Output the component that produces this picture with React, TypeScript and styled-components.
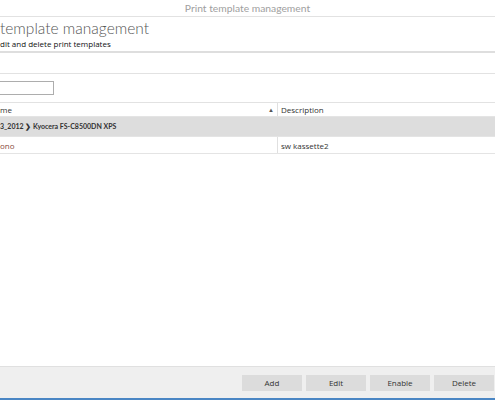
import React from "react";
import styled, { createGlobalStyle } from "styled-components";

const GlobalStyle = createGlobalStyle`
  html, body {
    margin: 0;
    padding: 0;
    background: #ffffff;
  }
  body {
    font-family: "Open Sans", "Noto Sans", "Liberation Sans", sans-serif;
  }
`;

const Window = styled.div`
  width: 495px;
  height: 400px;
  display: flex;
  flex-direction: column;
  overflow: hidden;
  background: #ffffff;
`;

const TitleBar = styled.div`
  height: 16px;
  border-bottom: 1px solid #e2e2e2;
  display: flex;
  align-items: center;
  justify-content: center;
  font-family: "Lato", "Open Sans", sans-serif;
  font-size: 10.3px;
  color: #a0a0a0;
`;

const Header = styled.div`
  height: 33px;
  padding-top: 1px;
  border-bottom: 2px solid #dedede;
  display: flex;
  flex-direction: column;
`;

const PageTitle = styled.div`
  font-family: "Lato", "Open Sans", sans-serif;
  font-size: 15.5px;
  font-weight: 300;
  line-height: 21px;
  color: #555555;
  white-space: nowrap;
`;

const PageSubtitle = styled.div`
  font-size: 8px;
  font-weight: 400;
  line-height: 10px;
  color: #111111;
  white-space: nowrap;
`;

const Toolbar = styled.div`
  height: 20px;
  border-bottom: 1px solid #e2e2e2;
`;

const SearchBar = styled.div`
  height: 28px;
  border-bottom: 1px solid #e2e2e2;
  display: flex;
  align-items: center;
  margin-left: -2px;
`;

const SearchInput = styled.input`
  width: 54px;
  height: 12px;
  border: 1px solid #adadad;
  padding: 0;
  margin: 0;
  outline: none;
  font-size: 8px;
`;

const Grid = styled.div`
  display: flex;
  flex-direction: column;
`;

const Row = styled.div<{ $height: number }>`
  display: grid;
  grid-template-columns: 277px 1fr;
  height: ${(p) => p.$height}px;
  border-bottom: 1px solid #e4e4e4;
  font-size: 8px;
  color: #333333;
`;

const Cell = styled.div<{ $divider?: boolean; $color?: string }>`
  display: flex;
  align-items: center;
  padding-left: ${(p) => (p.$divider ? "3px" : "0")};
  border-left: ${(p) => (p.$divider ? "1px solid #e0e0e0" : "none")};
  color: ${(p) => p.$color || "inherit"};
  white-space: nowrap;
  overflow: hidden;
`;

const HeaderCell = styled(Cell)`
  justify-content: space-between;
  padding-right: 3px;
`;

const SortArrow = styled.span`
  font-size: 6px;
  color: #555555;
`;

const GroupRow = styled.div`
  height: 19px;
  background: #dddddd;
  display: flex;
  align-items: center;
  font-family: "Lato", "Open Sans", sans-serif;
  font-size: 7px;
  font-weight: 700;
  color: #333333;
  white-space: nowrap;
  border-bottom: 1px solid #e4e4e4;
`;

const Spacer = styled.div`
  flex: 1;
`;

const Footer = styled.div`
  height: 31px;
  border-top: 1px solid #e0e0e0;
  border-bottom: 2px solid #4a86c4;
  background: #efefef;
  display: flex;
  align-items: center;
  justify-content: flex-end;
  gap: 4px;
  padding-right: 1px;
`;

const Button = styled.button`
  width: 60px;
  height: 16px;
  border: none;
  background: #dcdcdc;
  font-family: inherit;
  font-size: 8px;
  color: #333333;
  padding: 0;
  cursor: pointer;
`;

const App: React.FC = () => {
  return (
    <>
      <GlobalStyle />
      <Window>
        <TitleBar>Print template management</TitleBar>
        <Header>
          <PageTitle>template management</PageTitle>
          <PageSubtitle>dit and delete print templates</PageSubtitle>
        </Header>
        <Toolbar />
        <SearchBar>
          <SearchInput type="text" />
        </SearchBar>
        <Grid>
          <Row $height={13}>
            <HeaderCell>
              <span>me</span>
              <SortArrow>▲</SortArrow>
            </HeaderCell>
            <Cell $divider>Description</Cell>
          </Row>
          <GroupRow>3_2012 ❯ Kyocera FS-C8500DN XPS</GroupRow>
          <Row $height={16}>
            <Cell $color="#8a4b3c">ono</Cell>
            <Cell $divider>sw kassette2</Cell>
          </Row>
        </Grid>
        <Spacer />
        <Footer>
          <Button>Add</Button>
          <Button>Edit</Button>
          <Button>Enable</Button>
          <Button>Delete</Button>
        </Footer>
      </Window>
    </>
  );
};

export default App;
